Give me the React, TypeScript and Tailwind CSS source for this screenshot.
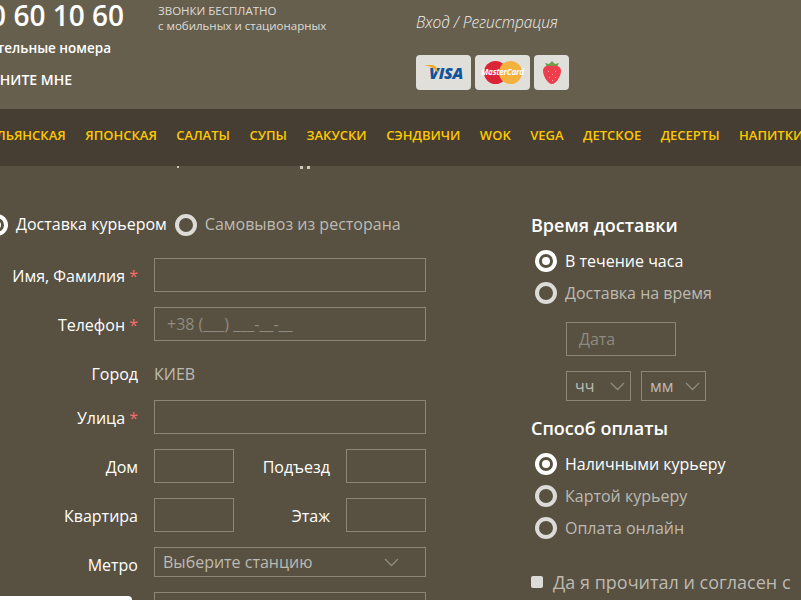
const font = "font-['Open_Sans',sans-serif]";

const nav = ['ИТАЛЬЯНСКАЯ', 'ЯПОНСКАЯ', 'САЛАТЫ', 'СУПЫ', 'ЗАКУСКИ', 'СЭНДВИЧИ', 'WOK', 'VEGA', 'ДЕТСКОЕ', 'ДЕСЕРТЫ', 'НАПИТКИ'];

function Radio({ on }: { on?: boolean }) {
  return (
    <span className={`flex h-[22px] w-[22px] shrink-0 items-center justify-center rounded-full border-4 ${on ? 'border-white' : 'border-[#dddbd7]'}`}>
      {on && <span className="h-2 w-2 rounded-full bg-white" />}
    </span>
  );
}

function Option({ on, label }: { on?: boolean; label: string }) {
  return (
    <div className="flex h-[22px] items-center gap-2 pl-1">
      <Radio on={on} />
      <span className={`text-base leading-[22px] ${on ? 'text-white' : 'text-[#bdbab2]'}`}>{label}</span>
    </div>
  );
}

function Chevron() {
  return (
    <svg width="15" height="9" viewBox="0 0 15 9" fill="none" className="shrink-0">
      <path d="M1 1l6.5 6.5L14 1" stroke="#8f8b80" strokeWidth="1.3" />
    </svg>
  );
}

function Field({ label, star }: { label: string; star?: boolean }) {
  return (
    <div className="flex h-[34px] items-center">
      <label className="w-[138px] shrink-0 pt-[2px] text-right text-base text-white">
        {label}
        {star && <span className="text-[#f56d6d]"> *</span>}
      </label>
      <div className="ml-4 h-[34px] w-[272px] border border-[#8c8678]" />
    </div>
  );
}

function Pair({ a, b }: { a: string; b: string }) {
  return (
    <div className="flex h-[34px] items-center">
      <label className="w-[138px] shrink-0 pt-[2px] text-right text-base text-white">{a}</label>
      <div className="ml-4 h-[34px] w-20 border border-[#8c8678]" />
      <label className="w-[96px] shrink-0 pt-[2px] text-right text-base text-white">{b}</label>
      <div className="ml-4 h-[34px] w-20 border border-[#8c8678]" />
    </div>
  );
}

function Cards() {
  return (
    <div className="mt-[21px] flex gap-1">
      <div className="relative flex h-[35px] w-[55px] items-center justify-end rounded-sm bg-[#e0dfda] pr-[8px]">
        <svg width="14" height="8" viewBox="0 0 14 8" className="absolute left-2 top-[10px]">
          <path d="M0 0h9q4 1 5 8Q10 2 0 0z" fill="#f0a92e" />
        </svg>
        <span className="text-[16px] font-extrabold italic leading-none tracking-[-0.3px] text-[#11549c]">VISA</span>
      </div>
      <div className="relative flex h-[35px] w-[55px] items-center justify-center rounded-sm bg-[#e0dfda]">
        <span className="h-[23px] w-[23px] rounded-full bg-[#dc2439]" />
        <span className="-ml-[8px] h-[23px] w-[23px] rounded-full bg-[#f4b13e]" />
        <span className="absolute inset-x-0 top-[12px] text-center text-[8px] font-bold italic leading-[10px] tracking-[-0.2px] text-white">MasterCard</span>
      </div>
      <div className="flex h-[35px] w-[35px] items-center justify-center rounded-sm bg-[#e0dfda]">
        <svg width="18" height="25" viewBox="0 0 18 25">
          <path d="M2 3l4 1 3-3 3 3 4-1-2 4H4z" fill="#6da04d" />
          <path d="M9 6c5-1 9 0 9 5 0 5-5 13-9 13S0 16 0 11c0-5 4-6 9-5z" fill="#ee3e4d" />
          <path d="M5 11h1v1H5zm7 0h1v1h-1zM9 14h1v1H9zm-3 3h1v1H6zm6 0h1v1h-1zm-3 3h1v1H9z" fill="#f6a3a8" />
        </svg>
      </div>
    </div>
  );
}

export default function App() {
  return (
    <div className={`relative h-[600px] w-[801px] overflow-hidden bg-[#585141] ${font}`}>
      <header className="flex h-[109px] bg-[#675f4e]">
        <div className="flex w-[124px] shrink-0 flex-col items-end overflow-hidden whitespace-nowrap text-white">
          <div className="h-[31px] text-[28px] font-semibold leading-[30px]">0 800 60 10 60</div>
          <div className="mt-[7px] pr-[13px] text-[13.5px] font-semibold leading-5">Дополнительные номера</div>
          <div className="mt-3 pr-[52px] text-sm font-semibold leading-5">ПОЗВОНИТЕ МНЕ</div>
        </div>
        <div className="ml-[34px] w-[258px] shrink-0 pt-[3px] text-[11.5px] leading-[15px] text-[#dedcd6]">
          <div>ЗВОНКИ БЕСПЛАТНО</div>
          <div>с мобильных и стационарных</div>
        </div>
        <div className="pt-[11px]">
          <div className="text-[15.5px] font-light italic leading-[23px] text-[#f0efeb]">Вход / Регистрация</div>
          <Cards />
        </div>
      </header>

      <nav className="flex h-[57px] items-center whitespace-nowrap bg-[#463e33] pb-1 text-[13px] font-semibold text-[#fdc800]">
        <div className="-ml-[30px] flex gap-[19.5px]">
          {nav.map((n) => (
            <span key={n}>{n}</span>
          ))}
        </div>
      </nav>

      <span className="absolute left-[177px] top-[166px] h-[2px] w-[2px] bg-[#c9c6bd]" />
      <span className="absolute left-[300px] top-[166px] h-[3px] w-[3px] bg-[#c9c6bd]" />
      <span className="absolute left-[307px] top-[166px] h-[3px] w-[3px] bg-[#c9c6bd]" />

      <main className="flex pt-12">
        <div className="w-[531px] shrink-0">
          <div className="flex h-[22px] items-center text-base">
            <span className="-ml-[14px]">
              <Radio on />
            </span>
            <span className="ml-2 pb-[2px] text-white">Доставка курьером</span>
            <span className="ml-2">
              <Radio />
            </span>
            <span className="ml-2 pb-[2px] text-[#bdbab2]">Самовывоз из ресторана</span>
          </div>
          <div className="mt-[22px] flex flex-col gap-[15px]">
            <Field label="Имя, Фамилия" star />
            <div className="flex h-[34px] items-center">
              <label className="w-[138px] shrink-0 pt-[2px] text-right text-base text-white">
                Телефон<span className="text-[#f56d6d]"> *</span>
              </label>
              <div className="ml-4 flex h-[34px] w-[272px] items-center border border-[#8c8678] pl-3 text-base text-[#8f8b80]">+38 (___) ___-__-__</div>
            </div>
            <div className="flex h-[34px] items-center">
              <label className="w-[138px] shrink-0 pt-[2px] text-right text-base text-white">Город</label>
              <span className="ml-4 pt-[2px] text-base text-[#bdbab2]">КИЕВ</span>
            </div>
            <div className="-mt-[5px]">
              <Field label="Улица" star />
            </div>
            <Pair a="Дом" b="Подъезд" />
            <Pair a="Квартира" b="Этаж" />
            <div className="flex h-[30px] items-center">
              <label className="w-[138px] shrink-0 pt-[6px] text-right text-base text-white">Метро</label>
              <div className="ml-4 flex h-[30px] w-[272px] items-center justify-between border border-[#8c8678] pl-2 pr-[26px] text-base text-[#bdbab2]">
                Выберите станцию
                <Chevron />
              </div>
            </div>
            <div className="ml-[154px] h-[34px] w-[272px] border border-[#8c8678]" />
          </div>
        </div>

        <aside className="-mt-px w-[270px] shrink-0 text-white">
          <h3 className="h-6 text-lg font-semibold leading-6">Время доставки</h3>
          <div className="mt-[13px] flex flex-col gap-2.5">
            <Option on label="В течение часа" />
            <Option label="Доставка на время" />
          </div>
          <div className="ml-[35px] mt-[18px] flex h-[34px] w-[110px] items-center border border-[#8c8678] pl-3 text-base text-[#8f8b80]">Дата</div>
          <div className="ml-[35px] mt-[15px] flex gap-2.5">
            <div className="flex h-[30px] w-[65px] items-center justify-between border border-[#8c8678] pl-2 pr-[5px] text-base text-[#bdbab2]">
              чч
              <Chevron />
            </div>
            <div className="flex h-[30px] w-[65px] items-center justify-between border border-[#8c8678] pl-2 pr-[5px] text-base text-[#bdbab2]">
              мм
              <Chevron />
            </div>
          </div>
          <h3 className="mt-[15px] h-6 text-lg font-semibold leading-6">Способ оплаты</h3>
          <div className="mt-[13px] flex flex-col gap-2.5">
            <Option on label="Наличными курьеру" />
            <Option label="Картой курьеру" />
            <Option label="Оплата онлайн" />
          </div>
          <div className="mt-[29px] flex items-center">
            <span className="h-3 w-3 shrink-0 rounded-[2px] bg-[#dddbd7]" />
            <span className="ml-2.5 whitespace-nowrap text-lg text-[#bdbab2]">Да я прочитал и согласен с</span>
          </div>
        </aside>
      </main>

      <div className="absolute bottom-0 left-0 h-1 w-[132px] rounded-tr-[4px] bg-white" />
    </div>
  );
}
